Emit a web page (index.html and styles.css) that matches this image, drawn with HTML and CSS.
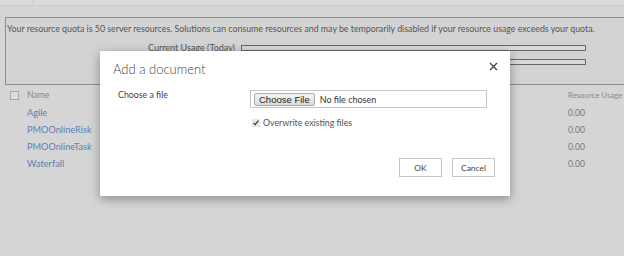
FILE: index.html
```html
<!DOCTYPE html>
<html lang="en">
<head>
    <meta charset="UTF-8">
    <title>Add a document</title>
    <link rel="stylesheet" href="styles.css">
</head>
<body>
<div class="topbar"><span class="topbar-tab"></span></div>

<div class="quota">
    <p class="quota-text">Your resource quota is 50 server resources. Solutions can consume resources and may be temporarily disabled if your resource usage exceeds your quota.</p>
    <div class="usage">
        <span class="usage-label">Current Usage (Today)</span>
        <span class="usage-bar"></span>
        <span class="usage-label">Average Usage (Last 14 days)</span>
        <span class="usage-bar"></span>
    </div>
</div>

<table class="solutions">
    <thead>
        <tr>
            <th class="col-check"><span class="box"></span></th>
            <th class="col-name">Name</th>
            <th class="col-usage">Resource Usage</th>
        </tr>
    </thead>
    <tbody>
        <tr><td></td><td><a href="#">Agile</a></td><td>0.00</td></tr>
        <tr><td></td><td><a href="#">PMOOnlineRisk</a></td><td>0.00</td></tr>
        <tr><td></td><td><a href="#">PMOOnlineTask</a></td><td>0.00</td></tr>
        <tr><td></td><td><a href="#">Waterfall</a></td><td>0.00</td></tr>
    </tbody>
</table>

<div class="dialog">
    <div class="dialog-head">
        <h1>Add a document</h1>
        <svg class="close" width="9" height="9" viewBox="0 0 9 9">
            <path d="M1 1 L8 8 M8 1 L1 8" stroke="#444" stroke-width="1.4"/>
        </svg>
    </div>
    <div class="dialog-body">
        <div class="field">
            <span class="field-label">Choose a file</span>
            <div class="field-input">
                <div class="file-box"><input type="file" id="file-input"></div>
                <label class="overwrite"><input type="checkbox" checked> Overwrite existing files</label>
            </div>
        </div>
    </div>
    <div class="dialog-buttons">
        <button type="button" class="btn">OK</button>
        <button type="button" class="btn">Cancel</button>
    </div>
</div>
</body>
</html>
```

FILE: styles.css
```css
html, body {
    margin: 0;
    height: 100%;
}
body {
    font-family: Lato, "Open Sans", sans-serif;
    background-color: #d5d5d5;
    color: #555;
    position: relative;
    overflow: hidden;
}
.topbar {
    height: 5px;
    background: #dbdbdb;
    border-bottom: 1px solid #cfcfcf;
}
.topbar-tab {
    display: block;
    width: 33px;
    height: 5px;
    border-right: 1px solid #c8c8c8;
}
.quota {
    margin: 11px 0 0 5px;
    height: 66px;
    border: 1px solid #8e8e8e;
    border-right: none;
    background: #d3d3d3;
}
.quota-text {
    margin: 5px 0 0 1px;
    font-size: 8.8px;
    color: #555;
    white-space: nowrap;
}
.usage {
    display: grid;
    grid-template-columns: 229px 345px;
    column-gap: 6px;
    row-gap: 8px;
    margin-top: 11px;
    align-items: center;
}
.usage-label {
    font-size: 9px;
    color: #555;
    text-align: right;
    line-height: 6px;
}
.usage-bar {
    height: 4px;
    border: 1px solid #666;
    background: #d9d9d9;
}
.solutions {
    border-collapse: collapse;
    table-layout: fixed;
    margin-top: 1px;
    width: 100%;
    font-size: 8.6px;
    white-space: nowrap;
}
.solutions th {
    font-weight: normal;
    color: #888;
    text-align: left;
    height: 18px;
}
.solutions th, .solutions td {
    padding: 0;
}
.solutions td {
    height: 17px;
    color: #777;
}
.col-check {
    width: 17px;
    padding-left: 10px !important;
}
.col-name {
    width: 541px;
}
.solutions .col-usage {
    font-size: 7.8px;
}
.box {
    display: block;
    width: 7px;
    height: 7px;
    border: 1px solid #a8a8a8;
    background: #dcdcdc;
}
.solutions a {
    color: #5f7fae;
    text-decoration: none;
    font-size: 9.2px;
}
.dialog {
    position: absolute;
    left: 100px;
    top: 51px;
    width: 410px;
    height: 145px;
    background: #fff;
    box-shadow: 0 3px 10px rgba(0, 0, 0, 0.35);
    display: flex;
    flex-direction: column;
}
.dialog-head {
    display: flex;
    justify-content: space-between;
    align-items: center;
    padding: 10px 12px 0 13px;
}
.dialog-head h1 {
    margin: 0;
    font-size: 13px;
    font-weight: 300;
    color: #444;
}
.close {
    margin-top: -6px;
}
.dialog-body {
    padding: 13px 23px 0 18px;
    flex: 1;
}
.field {
    display: flex;
}
.field-label {
    width: 132px;
    font-size: 8.8px;
    color: #444;
    margin-top: -1px;
}
.field-input {
    flex: 1;
}
.file-box {
    border: 1px solid #c6c6c6;
    height: 16px;
    width: 235px;
    display: flex;
    align-items: center;
}
.file-box input {
    font-family: Lato, sans-serif;
    font-size: 9px;
    color: #333;
    margin-left: 3px;
}
.file-box input::file-selector-button {
    font-family: "Liberation Sans", Arial, sans-serif;
    font-size: 9.5px;
    color: #222;
    height: 13px;
    padding: 0 4px;
    margin-right: 5px;
    border: 1px solid #aaa;
    border-radius: 2px;
    background: linear-gradient(#f4f4f4, #dcdcdc);
}
.overwrite {
    display: flex;
    align-items: center;
    gap: 3px;
    margin-top: 9px;
    margin-left: 2px;
    font-size: 8.8px;
    color: #555;
}
.overwrite input {
    margin: 0;
    width: 8px;
    height: 8px;
    accent-color: #e8e8e8;
}
.dialog-buttons {
    display: flex;
    justify-content: flex-end;
    gap: 10px;
    padding: 0 15px 19px 0;
}
.btn {
    width: 43px;
    height: 19px;
    border: 1px solid #c6c6c6;
    background: #fff;
    font-family: Lato, sans-serif;
    font-size: 8.4px;
    color: #444;
    padding: 0;
}
```
